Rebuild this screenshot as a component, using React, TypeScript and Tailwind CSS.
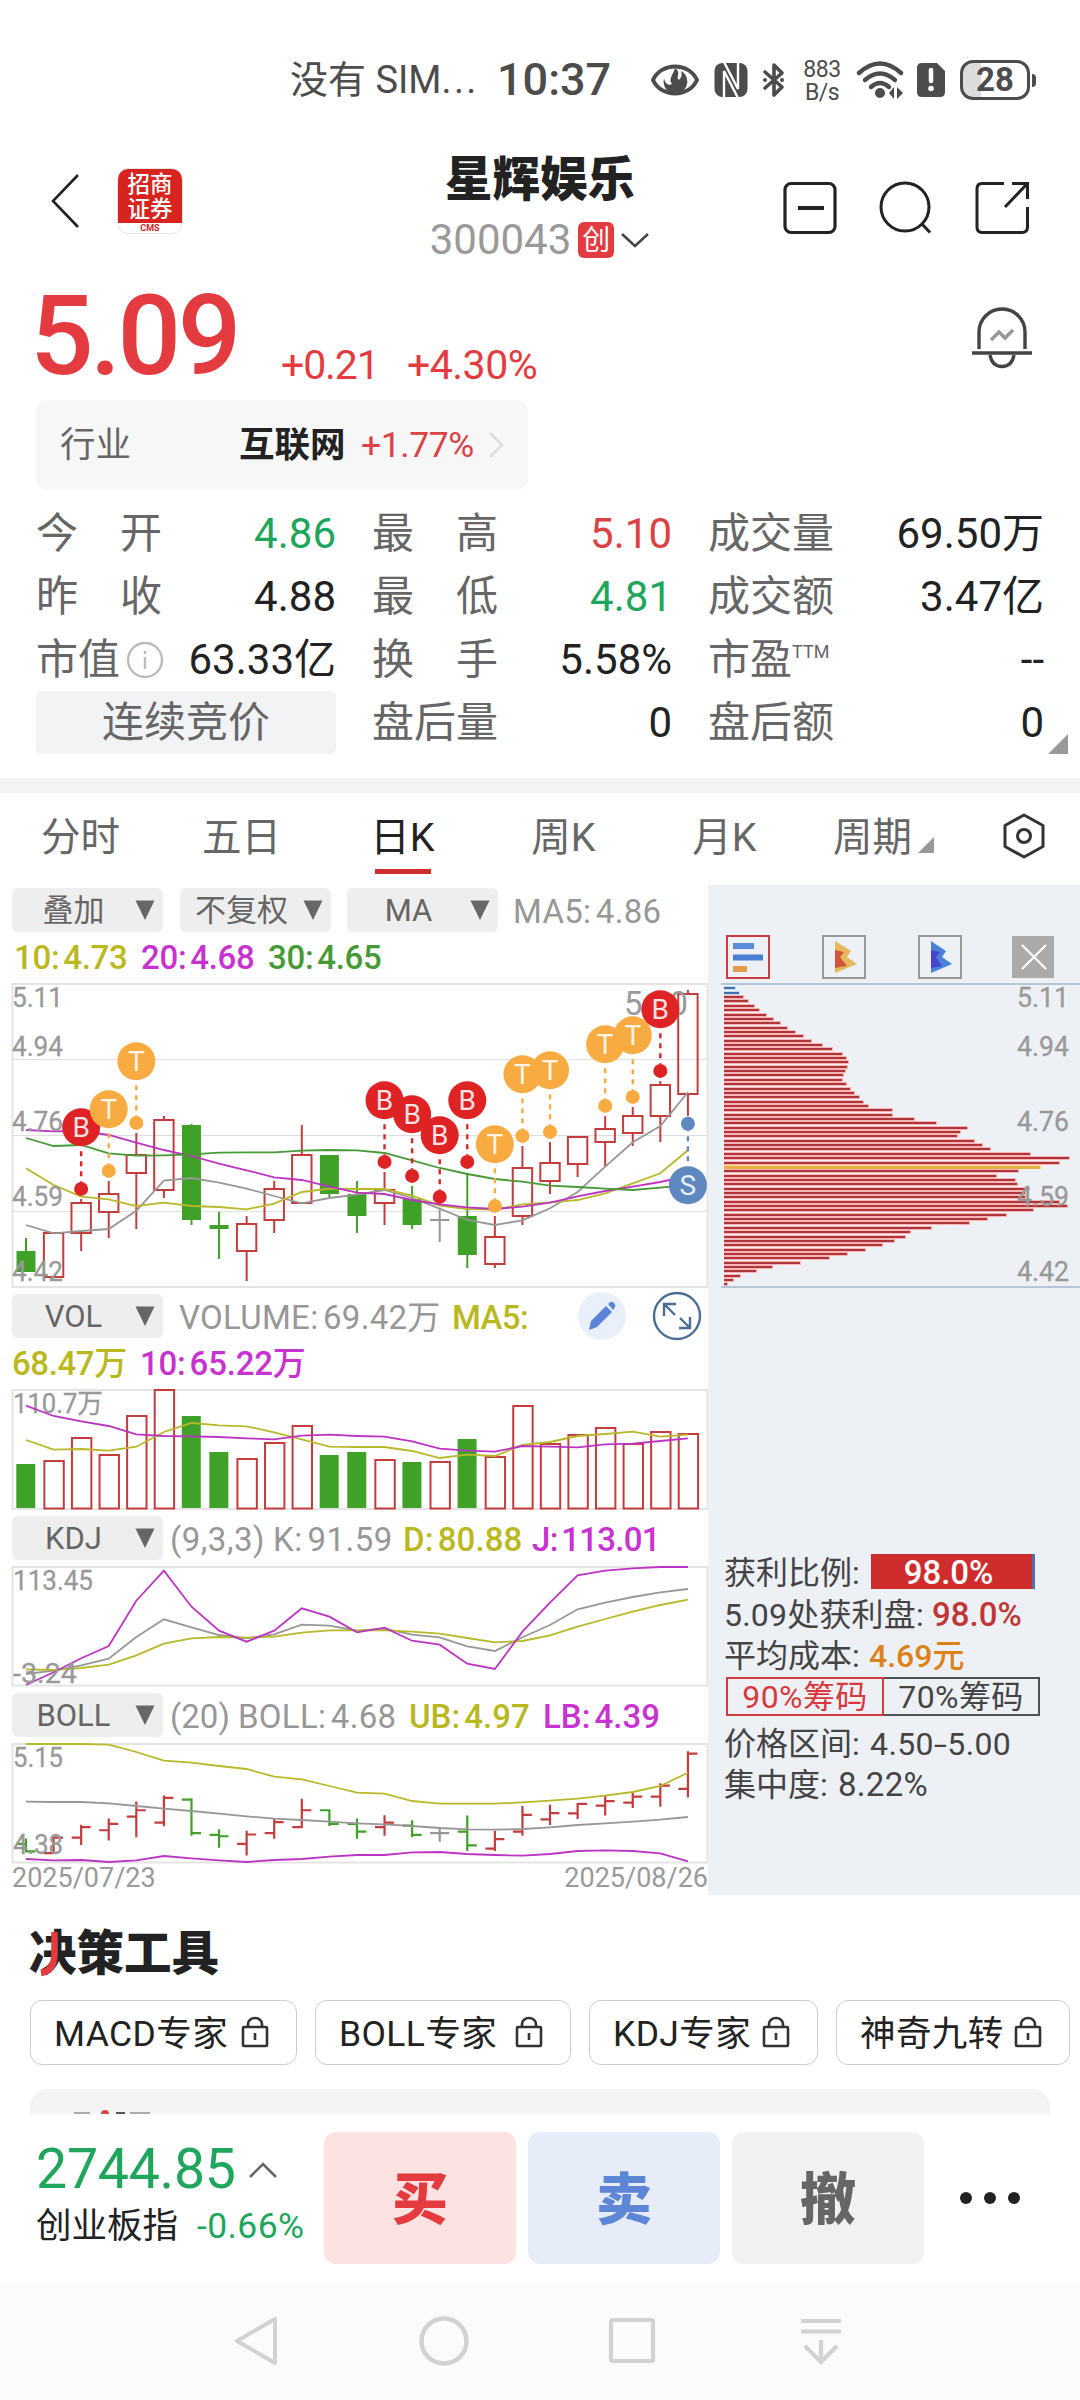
import type { ReactNode } from "react";

type Kind = "up" | "down" | "flat";

interface Candle {
  kind: Kind;
  top: number;
  bottom: number;
  high: number;
  low: number;
}

interface Marker {
  index: number;
  label: "B" | "T" | "S";
  y: number;
}

const RED = "#c43c3c";
const GREEN = "#3fa127";
const GRAY = "#979797";
const YELLOW = "#b9b82a";
const MAGENTA = "#bb35c2";

const xAt = (i: number) => 26 + i * 27.58;

const c = (kind: Kind, top: number, bottom: number, high: number, low: number): Candle => ({ kind, top, bottom, high, low });

const candles: Candle[] = [
  c("down", 1251, 1272, 1238, 1272),
  c("up", 1233, 1277, 1233, 1277),
  c("up", 1203, 1233, 1199, 1251),
  c("up", 1194, 1212, 1181, 1238),
  c("up", 1155, 1173, 1133, 1229),
  c("up", 1120, 1190, 1116, 1198),
  c("down", 1125, 1220, 1124, 1225),
  c("down", 1225, 1229, 1212, 1259),
  c("up", 1224, 1251, 1216, 1281),
  c("up", 1189, 1220, 1181, 1233),
  c("up", 1155, 1203, 1125, 1203),
  c("down", 1155, 1194, 1155, 1197),
  c("down", 1194, 1216, 1181, 1233),
  c("up", 1190, 1203, 1172, 1225),
  c("down", 1199, 1225, 1186, 1229),
  c("flat", 1220, 1220, 1208, 1242),
  c("down", 1216, 1255, 1173, 1268),
  c("up", 1237, 1264, 1216, 1268),
  c("up", 1168, 1216, 1146, 1225),
  c("up", 1163, 1181, 1142, 1194),
  c("up", 1137, 1164, 1137, 1177),
  c("up", 1129, 1142, 1116, 1167),
  c("up", 1116, 1133, 1107, 1146),
  c("up", 1085, 1116, 1081, 1142),
  c("up", 994, 1094, 990, 1116),
];

const volumeTops = [
  1464, 1461, 1438, 1455, 1416, 1390, 1416, 1452, 1459, 1443, 1426, 1455, 1452, 1460, 1462, 1462, 1439, 1457, 1406, 1444,
  1435, 1428, 1444, 1432, 1434,
];

// Line series are stored in thirds of a pixel below each chart's origin
const ma5 = [765, 790, 783, 777, 722, 632, 624, 638, 656, 678, 700, 684, 674, 660, 684, 716, 750, 765, 751, 715, 666, 590, 517, 468, 367];
const ma10 = [595, 645, 680, 688, 708, 698, 708, 711, 718, 701, 666, 656, 657, 657, 677, 707, 717, 719, 703, 697, 690, 670, 640, 610, 541];
const ma20 = [480, 484, 483, 495, 518, 540, 558, 581, 601, 622, 630, 650, 668, 672, 690, 703, 712, 717, 710, 698, 679, 663, 650, 636, 618];
const ma30 = [504, 528, 525, 550, 557, 556, 553, 548, 547, 547, 542, 540, 541, 549, 571, 594, 612, 627, 635, 647, 651, 656, 660, 653, 645];
const vol5 = [450, 479, 477, 482, 470, 426, 399, 406, 409, 427, 448, 470, 471, 471, 483, 504, 494, 498, 465, 456, 438, 432, 425, 440, 434];
const vol10 = [347, 378, 394, 408, 433, 438, 439, 441, 445, 448, 437, 434, 438, 440, 454, 476, 482, 485, 468, 470, 472, 463, 461, 453, 445];
const kdjK = [492, 482, 466, 446, 381, 328, 352, 375, 385, 373, 344, 347, 362, 356, 374, 382, 409, 423, 382, 345, 298, 278, 261, 247, 237];
const kdjD = [478, 480, 474, 464, 436, 401, 385, 381, 383, 380, 368, 361, 361, 361, 365, 371, 384, 397, 393, 376, 350, 327, 305, 285, 269];
const kdjJ = [525, 487, 445, 408, 272, 182, 290, 362, 395, 362, 295, 320, 367, 353, 392, 404, 461, 477, 365, 278, 196, 182, 175, 171, 171];
const bollMid = [875, 876, 876, 880, 888, 896, 903, 911, 919, 926, 930, 935, 940, 943, 948, 954, 958, 959, 957, 952, 945, 940, 935, 929, 921];
const bollUp = [702, 702, 702, 704, 726, 752, 758, 768, 777, 800, 808, 828, 848, 851, 873, 881, 881, 881, 877, 872, 866, 857, 846, 828, 788];
const bollLow = [1047, 1051, 1050, 1056, 1051, 1038, 1045, 1051, 1056, 1050, 1047, 1040, 1035, 1035, 1027, 1026, 1032, 1035, 1037, 1032, 1023, 1021, 1023, 1030, 1054];

const markers: Marker[] = [
  { index: 2, label: "B", y: 1127.3 },
  { index: 3, label: "T", y: 1109.3 },
  { index: 4, label: "T", y: 1061.3 },
  { index: 13, label: "B", y: 1100.3 },
  { index: 14, label: "B", y: 1114.3 },
  { index: 15, label: "B", y: 1135.3 },
  { index: 16, label: "B", y: 1100.3 },
  { index: 17, label: "T", y: 1144.3 },
  { index: 18, label: "T", y: 1074.3 },
  { index: 19, label: "T", y: 1070.3 },
  { index: 21, label: "T", y: 1044.3 },
  { index: 22, label: "T", y: 1035.3 },
  { index: 23, label: "B", y: 1009.3 },
  { index: 24, label: "S", y: 1185.3 },
];

const markerColors = { B: "#df2224", T: "#f8ab40", S: "#5f88c0" };

const chips = [
  11, 15, 19, 24.3, 29.7, 35, 42, 48.7, 56, 62.7, 71, 79, 87, 98, 107.7, 118, 121.7, 123.7, 123.3, 121.3, 119.3, 117.7, 122,
  126, 130.3, 135, 139, 144, 168, 167.7, 190, 212, 243, 236, 233, 249.7, 258, 266, 306, 345, 334.7, 316, 294, 272, 290.7,
  293, 305.3, 301, 301, 335, 343, 309, 281.7, 263, 244.7, 207, 185.7, 180.7, 169.7, 158.3, 141, 123, 104.7, 76, 48, 32, 16, 9, 3,
];

const scaleLabels = [
  { text: "5.11", y: 1007 },
  { text: "4.94", y: 1056 },
  { text: "4.76", y: 1131 },
  { text: "4.59", y: 1206 },
  { text: "4.42", y: 1281 },
];

const Line = ({ data, origin, color }: { data: number[]; origin: number; color: string }) => (
  <polyline
    points={data.map((v, i) => `${xAt(i).toFixed(1)},${(origin + v / 3).toFixed(1)}`).join(" ")}
    fill="none"
    stroke={color}
    strokeWidth="1.8"
  />
);

const Frame = ({ top, bottom }: { top: number; bottom: number }) => (
  <rect x="12.5" y={top} width="695" height={bottom - top} fill="none" stroke="#e4e4e4" strokeWidth="2" />
);

const AxisText = ({ x, y, width, children }: { x: number; y: number; width: number; children: string }) => (
  <text x={x} y={y} textLength={width} lengthAdjust="spacingAndGlyphs" fontSize="27" fill="#999" stroke="#999" strokeWidth="0.3">
    {children}
  </text>
);

const PriceChart = () => (
  <svg viewBox="0 980 708 312" className="block h-[312px] w-[708px]">
    <Frame top={984} bottom={1287} />
    {[1059.5, 1135.5, 1211.5].map((y) => (
      <line key={y} x1="12" x2="708" y1={y} y2={y} stroke="#dedede" strokeWidth="1.2" />
    ))}
    {candles.map((k, i) => {
      const x = xAt(i);
      if (k.kind === "up") {
        return (
          <g key={i} stroke={RED} strokeWidth="2" fill="none">
            <path d={`M${x} ${k.high}V${k.top}M${x} ${k.bottom}V${k.low}`} />
            <rect x={x - 9.7} y={k.top} width="19.4" height={k.bottom - k.top} />
          </g>
        );
      }
      if (k.kind === "down") {
        return (
          <g key={i} fill={GREEN}>
            <rect x={x - 1} y={k.high} width="2" height={k.low - k.high} />
            <rect x={x - 9.5} y={k.top} width="19" height={k.bottom - k.top} />
          </g>
        );
      }
      return <path key={i} d={`M${x} ${k.high}V${k.low}M${x - 9.5} ${k.top}H${x + 9.5}`} stroke={GRAY} strokeWidth="2" />;
    })}
    <Line data={ma5} origin={970} color={GRAY} />
    <Line data={ma10} origin={970} color={YELLOW} />
    <Line data={ma20} origin={970} color={MAGENTA} />
    <Line data={ma30} origin={970} color="#469a35" />
    {scaleLabels.map((l) => (
      <AxisText key={l.text} x={12} y={l.y} width={51}>
        {l.text}
      </AxisText>
    ))}
    <text x="624" y="1015" textLength="64" lengthAdjust="spacingAndGlyphs" fontSize="33" fill="#999">
      5.10
    </text>
    {markers.map(({ index, label, y }) => {
      const x = xAt(index);
      const color = markerColors[label];
      const dir = label === "S" ? -1 : 1;
      return (
        <g key={index}>
          <line x1={x} x2={x} y1={y + dir * 24} y2={y + dir * 55} stroke={color} strokeWidth="2.4" strokeDasharray="5 5" />
          <circle cx={x} cy={y + dir * 61.6} r="7" fill={color} />
          <circle cx={x} cy={y} r="19" fill={color} />
          <text x={x} y={y + 10} textAnchor="middle" fontSize="28" fill="#fff" fillOpacity="0.88">
            {label}
          </text>
        </g>
      );
    })}
  </svg>
);

const VolumeChart = () => (
  <svg viewBox="0 1386 708 128" className="block h-[128px] w-[708px]">
    <Frame top={1390} bottom={1509} />
    <AxisText x={13} y={1413} width={90}>
      110.7万
    </AxisText>
    {volumeTops.map((top, i) =>
      candles[i].kind === "down" ? (
        <rect key={i} x={xAt(i) - 9.7} y={top} width="19" height={1508 - top} fill={GREEN} />
      ) : (
        <rect key={i} x={xAt(i) - 9.2} y={top} width="19.4" height={1508.5 - top} fill="none" stroke={RED} strokeWidth="2" />
      )
    )}
    <Line data={vol5} origin={1290} color={YELLOW} />
    <Line data={vol10} origin={1290} color={MAGENTA} />
  </svg>
);

const KdjChart = () => (
  <svg viewBox="0 1562 708 129" className="block h-[129px] w-[708px]">
    <Frame top={1567} bottom={1685.5} />
    <Line data={kdjK} origin={1510} color={GRAY} />
    <Line data={kdjD} origin={1510} color={YELLOW} />
    <Line data={kdjJ} origin={1510} color={MAGENTA} />
    <AxisText x={13} y={1590} width={80}>
      113.45
    </AxisText>
    <AxisText x={13} y={1683} width={64}>
      -3.24
    </AxisText>
  </svg>
);

// Candle prices mapped on the wider BOLL scale
const bollY = (y: number) => 1750.2 + (y - 984) * 0.3512;

const BollChart = () => (
  <svg viewBox="0 1739 708 127" className="block h-[127px] w-[708px]">
    <Frame top={1744} bottom={1862.5} />
    {candles.map((k, i) => {
      const x = xAt(i);
      const open = bollY(k.kind === "up" ? k.bottom : k.top);
      const close = bollY(k.kind === "up" ? k.top : k.bottom);
      const color = k.kind === "up" ? RED : k.kind === "down" ? GREEN : GRAY;
      return (
        <path
          key={i}
          d={`M${x} ${bollY(k.high) - 1}V${bollY(k.low) + 1}M${x - 9.5} ${open}H${x}M${x} ${close}H${x + 9.5}`}
          stroke={color}
          strokeWidth="2.2"
        />
      );
    })}
    <Line data={bollMid} origin={1510} color={GRAY} />
    <Line data={bollUp} origin={1510} color={YELLOW} />
    <Line data={bollLow} origin={1510} color={MAGENTA} />
    <AxisText x={13} y={1767} width={50}>
      5.15
    </AxisText>
    <AxisText x={13} y={1854} width={50}>
      4.38
    </AxisText>
  </svg>
);

const ChipChart = () => (
  <svg viewBox="708 980 372 312" className="block h-[312px] w-[372px]">
    <g shapeRendering="crispEdges">
      {chips.map((w, i) => {
        const y = Math.round(988.4 + i * 4.353);
        const color = i < 2 ? "#3f6fae" : i === 41 ? "#e8b043" : "#ae3539";
        return (
          <g key={i}>
            <rect x="724" y={y - 2} width={w + 1} height="4" fill={i < 2 ? "#c5dcf5" : i === 41 ? "#f8d88c" : "#f9b4b6"} />
            <rect x="724" y={y - 1} width={w} height={i === 41 ? 3 : 2} fill={color} />
          </g>
        );
      })}
      <rect x="721" y="983" width="359" height="2" fill="#b7c6d7" />
      <rect x="721" y="1286" width="359" height="2" fill="#b7c6d7" />
    </g>
    {scaleLabels.map((l) => (
      <AxisText key={l.text} x={1017} y={l.y} width={52}>
        {l.text}
      </AxisText>
    ))}
  </svg>
);

const Picker = ({ label }: { label: string }) => (
  <div className="flex h-[44px] w-[151px] shrink-0 items-center rounded-md bg-[#eeeeee] text-[31px] leading-[47px] text-[#666]">
    <span className="w-[123px] text-center whitespace-nowrap">{label}</span>
    <svg viewBox="0 0 20 20" className="h-[20px] w-[20px] shrink-0">
      <path d="M0.5 0.5H19.5L10 20Z" fill="#666" />
    </svg>
  </div>
);

const Header = () => (
  <>
    <div className="flex h-[144px] items-center pt-[16px] pl-[290px] text-[#4c4c4c]">
      <span className="w-[207px] text-[38px] leading-[50px] whitespace-nowrap">
        没有 SIM<span className="tracking-[2.4px]">...</span>
      </span>
      <span className="w-[154px] text-[45px] leading-[50px] font-medium">10:37</span>
      <svg viewBox="0 0 48 34" className="h-[34px] w-[48px]">
        <path d="M2 17C10 -1 38 -1 46 17C38 35 10 35 2 17Z" fill="none" stroke="#4c4c4c" strokeWidth="4" />
        <path d="M24 5C31 10 24 14 28 17C31 14 31 11 30 8A12 12 0 1 1 13 15C14 21 18 23 21 21C17 16 22 12 24 5Z" fill="#4c4c4c" />
      </svg>
      <svg viewBox="0 0 34 36" className="ml-[15px] h-[36px] w-[34px]">
        <rect x="0.5" y="1" width="33" height="34" rx="8" fill="#4c4c4c" />
        <path d="M10 36V9L24 36M10 0L24 27V0" fill="none" stroke="#fff" strokeWidth="2.4" />
      </svg>
      <svg viewBox="0 0 24 38" className="ml-[14px] h-[38px] w-[24px]">
        <path d="M3 11L20 26L12 34V4L20 12L3 27" fill="none" stroke="#4c4c4c" strokeWidth="3.6" strokeLinejoin="round" strokeLinecap="round" />
        <circle cx="3" cy="19" r="2" fill="#4c4c4c" />
        <circle cx="20" cy="19" r="2" fill="#4c4c4c" />
      </svg>
      <div className="ml-[15px] w-[42px] pt-[2px] text-center text-[23px] leading-[23px] tracking-[-0.5px]">
        <div>883</div>
        <div>B/s</div>
      </div>
      <svg viewBox="0 0 48 38" className="ml-[13px] h-[38px] w-[48px]">
        <g fill="none" stroke="#4c4c4c" strokeWidth="4.4" strokeLinecap="round">
          <path d="M3 12Q24 -7 45 12" />
          <path d="M9 19Q24 6 39 19" />
          <path d="M15 26Q24 18 33 26" />
        </g>
        <circle cx="24" cy="32" r="5" fill="#4c4c4c" />
        <path d="M38 26V38L33 32ZM41 26V38L47 32Z" fill="#4c4c4c" />
      </svg>
      <svg viewBox="0 0 30 36" className="ml-[12px] h-[36px] w-[30px]">
        <path d="M6 1H21L29 9V30Q29 35 24 35H6Q1 35 1 30V6Q1 1 6 1Z" fill="#4c4c4c" />
        <path d="M15 8V19" stroke="#fff" strokeWidth="4.5" strokeLinecap="round" />
        <circle cx="15" cy="26.5" r="2.8" fill="#fff" />
      </svg>
      <div className="ml-[14px] flex h-[40px] w-[70px] items-center justify-center rounded-[13px] border-[3px] border-[#4c4c4c] bg-linear-to-r from-[#dcdcdc] from-28% to-white to-28% text-[33px] leading-[34px] font-bold">
        28
      </div>
      <div className="ml-[2px] h-[13px] w-[4px] rounded-r-full bg-[#4c4c4c]" />
    </div>

    <div className="flex h-[126px] items-start">
      <svg viewBox="0 0 30 56" className="mt-[29px] ml-[50px] h-[56px] w-[30px]">
        <path d="M28 2L3 28L28 54" fill="none" stroke="#222" strokeWidth="2.6" />
      </svg>
      <div className="mt-[24px] ml-[37px] flex h-[66px] w-[66px] flex-col overflow-hidden rounded-[11px] border border-[#e5e5e5] bg-white">
        <div className="h-[54px] shrink-0 bg-[#d8241f] pt-[3px] text-center text-[22.5px] leading-[25px] font-medium text-white">
          招商
          <br />
          证券
        </div>
        <div className="text-center text-[9px] leading-[10px] font-bold text-[#d8241f]">CMS</div>
      </div>
      <div className="ml-[217px] w-[280px] text-center">
        <div className="pt-[4px] text-[47.5px] leading-[64px] font-black text-[#222]">星辉娱乐</div>
        <div className="-mt-[2px] flex h-[60px] items-center justify-center text-[#999]">
          <span className="text-[42px] leading-[62px]">300043</span>
          <span className="ml-[7px] h-[36px] w-[36px] rounded-[6px] bg-[#e43b40] text-[28px] leading-[37px] text-white">创</span>
          <svg viewBox="0 0 30 16" className="ml-[6px] h-[16px] w-[30px]">
            <path d="M2 2L15 14L28 2" fill="none" stroke="#444" strokeWidth="2.5" />
          </svg>
        </div>
      </div>
      <svg viewBox="0 0 54 54" className="mt-[37px] ml-[103px] h-[54px] w-[54px]" fill="none" stroke="#222" strokeWidth="3.2">
        <rect x="2" y="2.5" width="50" height="49" rx="6" />
        <path d="M15 27H41" strokeWidth="4" />
      </svg>
      <svg viewBox="0 0 54 54" className="mt-[37px] ml-[42px] h-[54px] w-[54px]" fill="none" stroke="#222" strokeWidth="3">
        <circle cx="26" cy="26" r="24" />
        <path d="M43 43L51 51.5" />
      </svg>
      <svg viewBox="0 0 56 54" className="mt-[37px] ml-[41px] h-[54px] w-[56px]" fill="none" stroke="#222" strokeWidth="3">
        <path d="M30 2.5H8Q3 2.5 3 8V46Q3 51.5 8 51.5H48Q53.500 51.5 53.500 46V26" />
        <path d="M38 2.500H53.500V18M52 4L31 26" />
      </svg>
    </div>

    <div className="flex h-[130px] items-start text-[#e43b40]">
      <span className="w-[248px] pl-[30px] text-[112px] leading-[131px] font-medium tracking-[-3.6px]">5.09</span>
      <span className="w-[127px] pl-[33px] pt-[65px] text-[41px] leading-[60px] tracking-[-1.1px] whitespace-nowrap">+0.21</span>
      <span className="ml-[32px] pt-[65px] text-[41px] leading-[60px] tracking-[-0.5px]">+4.30%</span>
      <svg viewBox="0 0 62 64" className="mt-[36px] mr-[47px] ml-auto h-[64px] w-[62px]" fill="none" stroke="#444" strokeWidth="3.4">
        <path d="M8 43V26A23 23 0 0 1 54 26V43" />
        <path d="M1 47H61" />
        <path d="M19 49Q21 60.500 31 60.500T43 49" />
        <path d="M20 34L28 26L34 32L42 24" stroke="#999" strokeWidth="3.5" />
      </svg>
    </div>
  </>
);

interface StatProps {
  label: ReactNode;
  value: string;
  tone?: string;
}

const Stat = ({ label, value, tone = "text-[#222]" }: StatProps) => (
  <div className="flex h-[63px] items-start justify-between text-[42px] leading-[65px] whitespace-nowrap">
    <span className="flex items-center text-[#666]">{label}</span>
    <span className={tone}>{value}</span>
  </div>
);

const Spread = ({ a, b }: { a: string; b: string }) => (
  <span className="flex w-[126px] justify-between">
    <span>{a}</span>
    <span>{b}</span>
  </span>
);

const Quotes = () => (
  <>
    <div className="ml-[36px] flex h-[90px] w-[492px] items-center rounded-[12px] bg-[#f7f7f7] pl-[24px] text-[35.500px] leading-[60px]">
      <span className="w-[179px] text-[#666]">行业</span>
      <span className="w-[122px] font-bold text-[#222]">互联网</span>
      <span className="w-[127px] tracking-[-0.4px] text-[#dc4145]">+1.77%</span>
      <svg viewBox="0 0 16 28" className="h-[28px] w-[16px]">
        <path d="M2 2L14 14L2 26" fill="none" stroke="#ddd" strokeWidth="2.5" />
      </svg>
    </div>
    <div className="mt-[11px] flex h-[277px] items-start pr-[12px] pl-[36px]">
      <div className="w-[300px]">
        <Stat label={<Spread a="今" b="开" />} value="4.86" tone="text-[#20a65c]" />
        <Stat label={<Spread a="昨" b="收" />} value="4.88" />
        <Stat
          label={
            <>
              市值
              <svg viewBox="0 0 40 40" className="ml-[5px] h-[40px] w-[40px]" fill="none" stroke="#bbb" strokeWidth="2.4">
                <circle cx="20" cy="20" r="17" />
                <path d="M20 17V29M20 11V14" />
              </svg>
            </>
          }
          value="63.33亿"
        />
        <div className="mt-px h-[63px] rounded-[6px] bg-[#f2f3f5] text-center text-[42px] leading-[64px] text-[#666]">连续竞价</div>
      </div>
      <div className="ml-[36px] w-[300px]">
        <Stat label={<Spread a="最" b="高" />} value="5.10" tone="text-[#dc4145]" />
        <Stat label={<Spread a="最" b="低" />} value="4.81" tone="text-[#20a65c]" />
        <Stat label={<Spread a="换" b="手" />} value="5.58%" />
        <Stat label="盘后量" value="0" />
      </div>
      <div className="ml-[36px] w-[336px]">
        <Stat label="成交量" value="69.50万" />
        <Stat label="成交额" value="3.47亿" />
        <Stat
          label={
            <>
              市盈<span className="mb-[16px] text-[18px] leading-[18px]">TTM</span>
            </>
          }
          value="--"
        />
        <Stat label="盘后额" value="0" />
      </div>
      <svg viewBox="0 0 20 20" className="mt-[233px] ml-[4px] h-[20px] w-[20px]">
        <path d="M20 0V20H0Z" fill="#999" />
      </svg>
    </div>
    <div className="h-[15px] bg-[#f2f3f5]" />
  </>
);

const Tabs = () => (
  <div className="flex h-[92px] text-[39.500px] leading-[90px] text-[#666]">
    {["分时", "五日", "日K", "周K", "月K"].map((tab) => (
      <div key={tab} className={`flex w-[161px] flex-col items-center ${tab === "日K" ? "text-[#222]" : ""}`}>
        <span className="h-[76px]">{tab}</span>
        {tab === "日K" && <span className="h-[5px] w-[56px] bg-[#d02e2e]" />}
      </div>
    ))}
    <div className="flex w-[130px] items-start pl-[28px]">
      <span>周期</span>
      <svg viewBox="0 0 16 16" className="mt-[44px] ml-[6px] h-[16px] w-[16px] shrink-0">
        <path d="M16 0V16H0Z" fill="#999" />
      </svg>
    </div>
    <svg viewBox="0 0 44 48" className="mt-[19px] ml-[67px] h-[48px] w-[44px]" fill="none" stroke="#333" strokeWidth="3">
      <path d="M22 3L41 13.500V34.500L22 45L3 34.500V13.500Z" strokeLinejoin="round" />
      <circle cx="22" cy="24" r="6.500" />
    </svg>
  </div>
);

const Indicators = () => (
  <div className="w-[708px] text-[33px] leading-[47px] [word-spacing:-4px] whitespace-nowrap text-[#979797]">
    <div className="flex h-[51px] items-start pt-[3px] pl-[12px]">
      <Picker label="叠加" />
      <div className="w-[17px]" />
      <Picker label="不复权" />
      <div className="w-[16px]" />
      <Picker label="MA" />
      <span className="ml-[15px] tracking-[0.3px]">MA5: 4.86</span>
    </div>
    <div className="flex h-[44px] items-start pl-[14px] leading-[43px] font-medium">
      <span className="w-[127px] tracking-[-0.3px] text-[#bab81f]">10: 4.73</span>
      <span className="w-[127px] tracking-[-0.3px] text-[#c832d0]">20: 4.68</span>
      <span className="tracking-[-0.3px] text-[#469a35]">30: 4.65</span>
    </div>
    <PriceChart />
    <div className="flex h-[48px] items-start pt-[2px] pl-[12px]">
      <Picker label="VOL" />
      <span className="w-[274px] pl-[16px] tracking-[0.3px]">VOLUME: 69.42万</span>
      <span className="ml-[15px] w-[125px] font-medium tracking-[-0.6px] text-[#bab81f]">MA5:</span>
      <svg viewBox="0 0 48 48" className="-mt-[2px] ml-px h-[48px] w-[48px] shrink-0">
        <circle cx="24" cy="24" r="24" fill="#e9effb" />
        <path d="M11 38L13 29L28 14L34 20L19 35Z" fill="#5b83d6" />
        <path d="M30 12L32.500 10Q34.500 9 36 11L37 12.500Q38 14 36.500 16L35 18Z" fill="#5b83d6" />
      </svg>
      <svg viewBox="0 0 50 50" className="-mt-[3px] ml-[26px] h-[50px] w-[50px] shrink-0" fill="none" stroke="#4a6d94" strokeWidth="2.400">
        <circle cx="25" cy="25" r="23" />
        <path d="M12 25V13H24M12.500 13.500L23 24M38 26V37H27M37.500 36.500L28 27" />
      </svg>
    </div>
    <div className="flex h-[46px] items-start pl-[12px] font-medium">
      <span className="w-[128px] tracking-[-0.4px] text-[#bab81f]">68.47万</span>
      <span className="tracking-[-0.2px] text-[#c832d0]">10: 65.22万</span>
    </div>
    <VolumeChart />
    <div className="flex h-[48px] items-start pt-[2px] pl-[12px]">
      <Picker label="KDJ" />
      <span className="ml-[7px] w-[103px] tracking-[0.5px]">(9,3,3)</span>
      <span className="w-[130px] tracking-[0.5px]">K: 91.59</span>
      <span className="w-[129px] font-medium tracking-[0.1px] text-[#bab81f]">D: 80.88</span>
      <span className="font-medium tracking-[-0.7px] text-[#c832d0]">J: 113.01</span>
    </div>
    <KdjChart />
    <div className="flex h-[48px] items-start pt-[2px] pl-[12px]">
      <Picker label="BOLL" />
      <span className="ml-[7px] w-[68px]">(20)</span>
      <span className="w-[171px] tracking-[0.3px]">BOLL: 4.68</span>
      <span className="w-[134px] font-medium text-[#bab81f]">UB: 4.97</span>
      <span className="font-medium text-[#c832d0]">LB: 4.39</span>
    </div>
    <BollChart />
    <div className="flex h-[29px] justify-between pl-[12px] text-[27px] leading-[25px] text-[#999]">
      <span>2025/07/23</span>
      <span>2025/08/26</span>
    </div>
  </div>
);

const ChipPanel = () => (
  <div className="flex h-[1010px] w-[372px] flex-col bg-[#edf0f5]">
    <div className="flex h-[95px] items-end pl-[18px]">
      <svg viewBox="0 0 44 44" className="mb-px h-[44px] w-[44px]">
        <rect x="1" y="1" width="42" height="42" fill="none" stroke="#c93d3f" strokeWidth="2" />
        <rect x="7" y="8" width="21" height="6" fill="#5b8cda" />
        <rect x="7" y="19.500" width="30" height="6" fill="#4a80d3" />
        <rect x="7" y="31" width="14" height="6" fill="#e39c46" />
      </svg>
      <svg viewBox="0 0 44 44" className="mb-px ml-[52px] h-[44px] w-[44px]">
        <rect x="1" y="1" width="42" height="42" fill="none" stroke="#999" strokeWidth="2" />
        <path d="M13 6L29 16L25 22L35 29L13 38Z" fill="#e6b95a" />
        <path d="M13 15L22 17L18 22L25 31L13 33Z" fill="#d4543a" />
      </svg>
      <svg viewBox="0 0 44 44" className="mb-px ml-[52px] h-[44px] w-[44px]">
        <rect x="1" y="1" width="42" height="42" fill="none" stroke="#999" strokeWidth="2" />
        <path d="M13 6L28 16L24 22L34 29L13 38Z" fill="#4a82da" />
        <path d="M13 15L22 17L18 22L24 31L13 33Z" fill="#4744d0" />
      </svg>
      <svg viewBox="0 0 42 42" className="mb-[2px] ml-[50px] h-[42px] w-[42px]">
        <rect width="42" height="42" fill="#aaa" />
        <path d="M10 9L34 33M34 9L10 33" stroke="#fff" strokeWidth="2.200" />
      </svg>
    </div>
    <ChipChart />
    <div className="mt-[260px] pl-[16px] text-[32px] leading-[42px] whitespace-nowrap text-[#444]">
      <div className="flex h-[42px] items-start">
        <span className="w-[147px] leading-[43px]">获利比例:</span>
        <span className="mt-[2px] h-[35px] w-[164px] border-r-[3px] border-[#4a72ac] bg-[#cf2d2d] pr-[6px] text-center text-[33px] leading-[38px] font-medium text-white">
          98.0%
        </span>
      </div>
      <div className="flex h-[41px]">
        <span className="w-[208px] tracking-[0.2px]">5.09处获利盘:</span>
        <span className="text-[33px] font-medium text-[#c23536]">98.0%</span>
      </div>
      <div className="flex h-[42px]">
        <span className="w-[145px]">平均成本:</span>
        <span className="font-medium text-[#dc8219]">4.69元</span>
      </div>
      <div className="ml-[2px] flex h-[39px] text-center leading-[37px]">
        <span className="w-[158px] border-2 border-[#d03c3e] tracking-[0.4px] text-[#d8383b]">90%筹码</span>
        <span className="w-[156px] border-2 border-l-0 border-[#4d5254] tracking-[0.4px]">70%筹码</span>
      </div>
      <div className="mt-[7px] flex h-[41px]">
        <span className="w-[146px]">价格区间:</span>
        <span className="flex items-center tracking-[0.4px]">
          4.50<span className="mx-[2px] inline-block scale-x-150">-</span>5.00
        </span>
      </div>
      <div className="flex h-[41px]">
        <span className="w-[114px]">集中度:</span>
        <span className="text-[33px] tracking-[0.3px]">8.22%</span>
      </div>
    </div>
  </div>
);

const Tool = ({ name, width }: { name: string; width: string }) => (
  <div className={`flex h-[65px] shrink-0 items-center justify-between rounded-[12px] border border-[#ccc] pr-[27px] pl-[23px] ${width}`}>
    <span className="pt-[2px] tracking-[0.4px] whitespace-nowrap">{name}</span>
    <svg viewBox="0 0 28 32" className="-mt-[2px] h-[32px] w-[28px] shrink-0" fill="none" stroke="#333" strokeWidth="2.600">
      <rect x="2" y="11" width="24" height="19" rx="1" />
      <path d="M7 11V8A7 6 0 0 1 21 8V11M14 17V24" />
    </svg>
  </div>
);

const Tools = () => (
  <div className="h-[219px] overflow-hidden">
    <div className="relative h-[105px] pt-[24px] pl-[29px] text-[47.5px] leading-[70px] font-black text-[#222]">
      决策工具
      <svg viewBox="0 0 22 48" className="absolute top-[36px] left-[38px] h-[48px] w-[22px]">
        <path d="M16.500 1V22Q16.500 40 3 42" fill="none" stroke="#e43b40" strokeWidth="6.500" />
      </svg>
    </div>
    <div className="flex gap-[18px] pl-[30px] text-[35.500px] leading-[60px] text-[#222]">
      <Tool name="MACD专家" width="w-[267px]" />
      <Tool name="BOLL专家" width="w-[256px]" />
      <Tool name="KDJ专家" width="w-[229px]" />
      <Tool name="神奇九转" width="w-[234px]" />
    </div>
    <div className="mt-[24px] ml-[30px] flex h-[25px] w-[1020px] items-end rounded-t-[18px] bg-[#f4f4f4] pl-[44px]">
      <span className="h-[2px] w-[16px] bg-[#aaa]" />
      <span className="ml-[11px] h-[4px] w-[8px] rounded-t bg-[#d8474a]" />
      <span className="ml-[7px] h-[2px] w-[9px] bg-[#555]" />
      <span className="ml-[5px] h-[2px] w-[20px] bg-[#aaa]" />
    </div>
  </div>
);

const TradeBar = () => (
  <div className="flex h-[168px] items-start bg-white pt-[18px]">
    <div className="w-[324px] pl-[36px]">
      <div className="flex h-[76px] items-center text-[#20a65c]">
        <span className="w-[212px] text-[55.500px] leading-[76px] tracking-[-0.3px]">2744.85</span>
        <svg viewBox="0 0 30 18" className="h-[18px] w-[30px]">
          <path d="M2 16L15 3L28 16" fill="none" stroke="#666" strokeWidth="2.600" />
        </svg>
      </div>
      <div className="flex h-[36px] text-[35.500px] leading-[36px] whitespace-nowrap">
        <span className="w-[161px] text-[#222]">创业板指</span>
        <span className="tracking-[0.4px] text-[#20a65c]">-0.66%</span>
      </div>
    </div>
    <div className="flex gap-[12px] text-center text-[56px] leading-[136px] font-black">
      <div className="h-[132px] w-[192px] rounded-[12px] bg-[#fde2e2] text-[#e43b3f]">买</div>
      <div className="h-[132px] w-[192px] rounded-[12px] bg-[#e6edf9] text-[#5d86d6]">卖</div>
      <div className="h-[132px] w-[192px] rounded-[12px] bg-[#f1f1f1] text-[#666]">撤</div>
    </div>
    <div className="mt-[60px] ml-[36px] flex gap-[12px]">
      <span className="size-[12px] rounded-full bg-[#222]" />
      <span className="size-[12px] rounded-full bg-[#222]" />
      <span className="size-[12px] rounded-full bg-[#222]" />
    </div>
  </div>
);

const SystemNav = () => (
  <div className="flex h-[118px] items-start bg-[#fbfbfb] pt-[33px] pl-[233px]">
    <svg viewBox="0 0 46 52" className="h-[52px] w-[46px]" fill="none" stroke="#d2d2d2" strokeWidth="4">
      <path d="M42 4V48L4 26Z" strokeLinejoin="round" />
    </svg>
    <svg viewBox="0 0 52 52" className="ml-[139px] h-[52px] w-[52px]" fill="none" stroke="#d2d2d2" strokeWidth="4.500">
      <circle cx="26" cy="26" r="22.500" />
    </svg>
    <svg viewBox="0 0 50 52" className="ml-[137px] h-[52px] w-[50px]" fill="none" stroke="#d2d2d2" strokeWidth="4.200">
      <rect x="4" y="5" width="42" height="41" rx="1.500" />
    </svg>
    <svg viewBox="0 0 44 52" className="ml-[142px] h-[52px] w-[44px]" fill="none" stroke="#d2d2d2" strokeWidth="4.200">
      <path d="M2 6H42M2 16.500H42M22 25V47M6 31L22 47L38 31" />
    </svg>
  </div>
);

export default function App() {
  return (
    <div className="flex h-[2400px] w-[1080px] flex-col overflow-hidden bg-white font-['Roboto','Noto_Sans_CJK_SC',sans-serif]">
      <Header />
      <Quotes />
      <Tabs />
      <div className="flex h-[1010px]">
        <Indicators />
        <ChipPanel />
      </div>
      <Tools />
      <TradeBar />
      <SystemNav />
    </div>
  );
}
